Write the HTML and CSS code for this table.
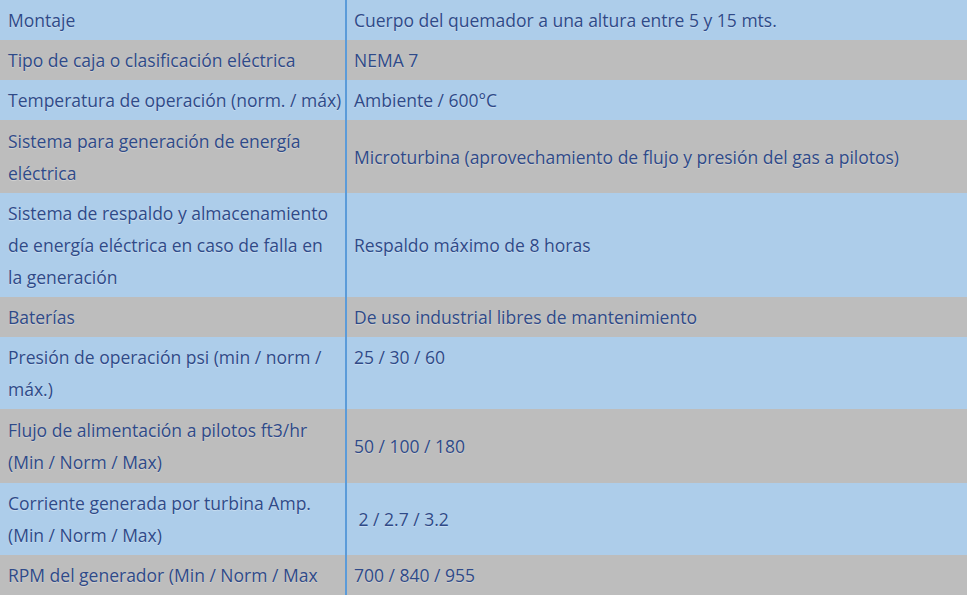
FILE: index.html
```html
<!DOCTYPE html>
<html lang="es">
<head>
<meta charset="utf-8">
<title>Especificaciones</title>
<link rel="stylesheet" href="styles.css">
</head>
<body>
<table class="spec">
  <colgroup><col class="ck"><col class="cv"></colgroup>
  <tbody>
    <tr class="blue"><td class="k">Montaje</td><td class="v">Cuerpo del quemador a una altura entre 5 y 15 mts.</td></tr>
    <tr class="gray"><td class="k">Tipo de caja o clasificación eléctrica</td><td class="v">NEMA 7</td></tr>
    <tr class="blue"><td class="k">Temperatura de operación (norm. / máx)</td><td class="v">Ambiente / 600°C</td></tr>
    <tr class="gray h73"><td class="k">Sistema para generación de energía<br>eléctrica</td><td class="v">Microturbina (aprovechamiento de flujo y presión del gas a pilotos)</td></tr>
    <tr class="blue"><td class="k">Sistema de respaldo y almacenamiento<br>de energía eléctrica en caso de falla en<br>la generación</td><td class="v">Respaldo máximo de 8 horas</td></tr>
    <tr class="gray"><td class="k">Baterías</td><td class="v">De uso industrial libres de mantenimiento</td></tr>
    <tr class="blue"><td class="k">Presión de operación psi (min / norm /<br>máx.)</td><td class="v top">25 / 30 / 60</td></tr>
    <tr class="gray h74"><td class="k">Flujo de alimentación a pilotos ft3/hr<br>(Min / Norm / Max)</td><td class="v">50 / 100 / 180</td></tr>
    <tr class="blue"><td class="k">Corriente generada por turbina Amp.<br>(Min / Norm / Max)</td><td class="v">&nbsp;2 / 2.7 / 3.2</td></tr>
    <tr class="gray h39"><td class="k">RPM del generador (Min / Norm / Max</td><td class="v">700 / 840 / 955</td></tr>
  </tbody>
</table>
</body>
</html>
```
FILE: styles.css
```css
html, body {
  margin: 0;
  padding: 0;
  background: #ffffff;
}
.spec {
  width: 967px;
  table-layout: fixed;
  border-collapse: collapse;
  font-family: "Open Sans", Lato, sans-serif;
  font-size: 17.5px;
  letter-spacing: 0;
  line-height: 32px;
  color: #2f4a88;
  text-shadow: 0 1px 1px rgba(255,255,255,0.35);
}
.ck { width: 346px; }
.spec td {
  padding: 4px 8px 4px 8px;
  vertical-align: middle;
}
.spec td.k {
  padding-right: 0;
  white-space: nowrap;
  overflow: hidden;
  border-right: 2px solid #5b9bd9;
}
.spec td.v {
  padding-left: 7px;
}
.spec td.top {
  vertical-align: top;
}
.h73 { height: 73px; }
.h74 { height: 74px; }
.h39 { height: 39px; }
.blue { background: #adcdea; }
.gray { background: #bdbdbd; }
```
